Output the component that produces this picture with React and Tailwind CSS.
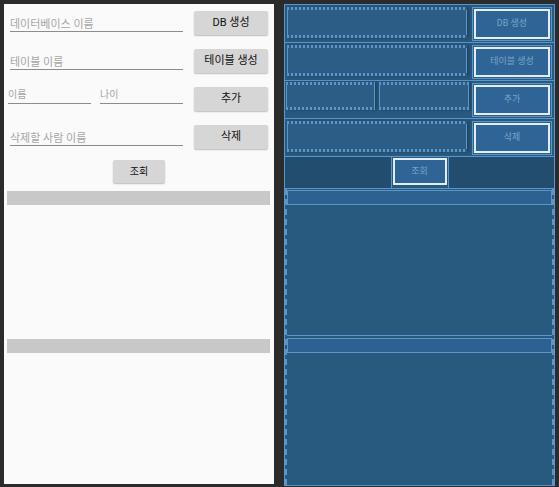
import React from 'react';

const font = { fontFamily: 'Roboto, "Noto Sans CJK KR", sans-serif' };

const Field = ({ hint, w, small }) => (
  <div className={`${w} flex items-end border-b border-[#8c8c8c] ${small ? 'h-[18px] text-[10px] pb-[3px]' : 'h-[18px] text-[11px] pb-[1px]'} text-[#a6a6a6] leading-none`}>
    {hint}
  </div>
);

const Btn = ({ label, className }) => (
  <button className={`h-[24px] w-[74px] rounded-[2px] bg-[#d6d6d6] shadow-[0_1px_1.5px_rgba(0,0,0,0.25)] text-[11px] font-normal text-[#111] ${className}`}>
    {label}
  </button>
);

const DesignRow = ({ hint, label }) => (
  <div className="flex h-[38px] items-start">
    <div className="ml-[6px] mt-[10px]">
      <Field hint={hint} w="w-[173px]" />
    </div>
    <Btn label={label} className="ml-auto mr-[6px] mt-[7px]" />
  </div>
);

const Zig = () => (
  <div className="h-[3px] w-full bg-[repeating-linear-gradient(90deg,#5c96c9_0_2px,transparent_2px_4px)]" />
);

const BpField = ({ w, h }) => (
  <div className={`${w} ${h} flex flex-col justify-between bg-[#2b5d86] shadow-[2px_0_3px_rgba(0,0,0,0.25)]`}>
    <Zig />
    <div className="flex-1 border-x border-[#5c96c9]" />
    <Zig />
  </div>
);

const BpBtn = ({ label }) => (
  <div className="ml-auto mr-[2px] mt-[2px] h-[34px] w-[80px] border border-[#5c96c9] bg-[#2c6190] p-[1px]">
    <div className="flex h-full w-full items-center justify-center border-2 border-[#e4edf6] bg-[#2e6596] text-[9px] text-[#7aa4c9]">
      {label}
    </div>
  </div>
);

const BpRow = ({ label, children }) => (
  <div className="flex h-[38px] items-start border-b border-[#5c96c9] bg-[#28597f]">
    {children}
    <BpBtn label={label} />
  </div>
);

export default function App() {
  return (
    <div className="flex h-[487px] w-[559px] items-start gap-[10px] bg-[#2b2b2b] pl-[4px] pt-[4px]" style={font}>
      {/* design view */}
      <div className="flex h-[480px] w-[270px] flex-col bg-[#fafafa]">
        <DesignRow hint="데이터베이스 이름" label="DB 생성" />
        <DesignRow hint="테이블 이름" label="테이블 생성" />
        <div className="flex h-[38px] items-start">
          <div className="ml-[4px] mt-[6px] flex gap-[9px]">
            <Field hint="이름" w="w-[83px]" small />
            <Field hint="나이" w="w-[83px]" small />
          </div>
          <Btn label="추가" className="ml-auto mr-[6px] mt-[7px] text-[10px]" />
        </div>
        <DesignRow hint="삭제할 사람 이름" label="삭제" />
        <div className="flex h-[32px] items-start justify-center">
          <button className="mt-[4px] h-[23px] w-[52px] rounded-[2px] bg-[#d6d6d6] text-[10px] font-normal text-[#111] shadow-[0_1px_1.5px_rgba(0,0,0,0.25)]">
            조회
          </button>
        </div>
        <div className="flex flex-col">
          <div className="h-[148px] pt-[3px]">
            <div className="ml-[3px] mr-[4px] h-[14px] bg-[#c8c8c8]" />
          </div>
          <div className="h-[148px] pt-[3px]">
            <div className="ml-[3px] mr-[4px] h-[14px] bg-[#c8c8c8]" />
          </div>
        </div>
      </div>

      {/* blueprint view */}
      <div className="flex h-[482px] w-[271px] flex-col border border-[#5c96c9] bg-[#28597f]">
        <BpRow label="DB 생성">
          <div className="ml-[2px] mt-[2px]"><BpField w="w-[180px]" h="h-[31px]" /></div>
        </BpRow>
        <BpRow label="테이블 생성">
          <div className="ml-[2px] mt-[2px]"><BpField w="w-[180px]" h="h-[31px]" /></div>
        </BpRow>
        <BpRow label="추가">
          <div className="ml-[1px] mt-[1px] flex gap-[4px]">
            <BpField w="w-[89px]" h="h-[28px]" />
            <BpField w="w-[90px]" h="h-[28px]" />
          </div>
        </BpRow>
        <BpRow label="삭제">
          <div className="ml-[2px] mt-[2px]"><BpField w="w-[180px]" h="h-[31px]" /></div>
        </BpRow>
        <div className="flex h-[32px] justify-center border-b border-[#5c96c9] bg-[#234d6e]">
          <div className="h-full w-[58px] border-x border-[#5c96c9] bg-[#28597f] p-[1px]">
            <div className="flex h-[27px] w-full items-center justify-center border-2 border-[#e4edf6] bg-[#2e6596] text-[9px] text-[#7aa4c9]">
              조회
            </div>
          </div>
        </div>
        <div className="flex flex-1 flex-col border-x-2 border-dashed border-[#5c96c9]">
          <div className="h-[147px] border-b border-[#5c96c9] pt-[1px]">
            <div className="h-[15px] border border-[#5c96c9] bg-[#2d6191]" />
          </div>
          <div className="flex-1 pt-[2px]">
            <div className="h-[15px] border border-[#5c96c9] bg-[#2d6191]" />
          </div>
        </div>
      </div>
    </div>
  );
}
